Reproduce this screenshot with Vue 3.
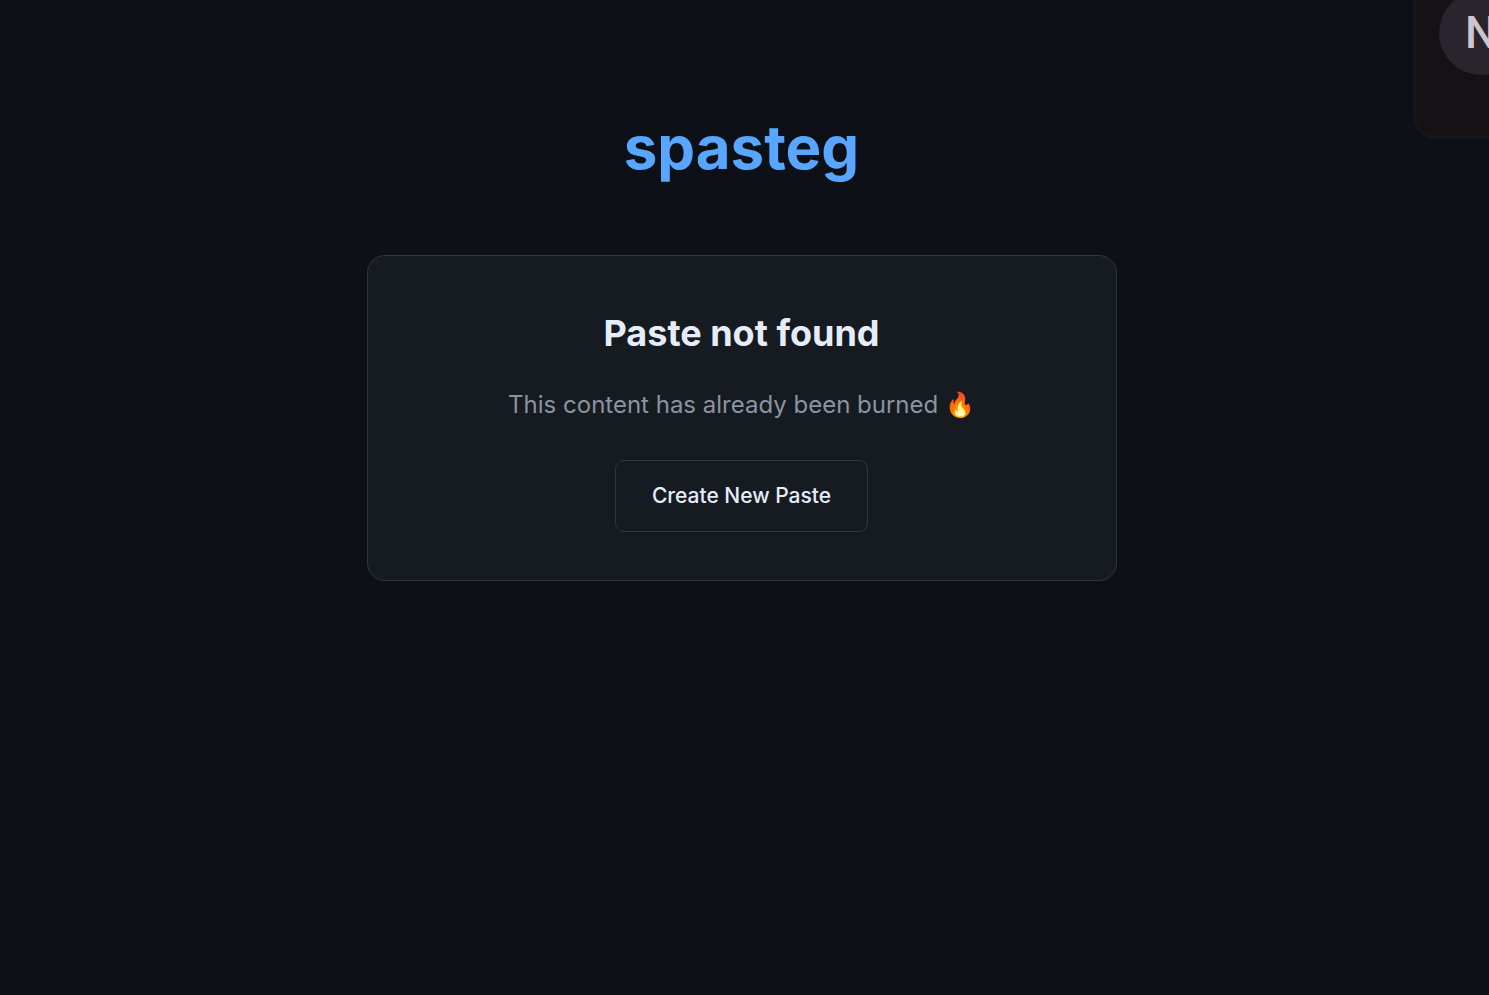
<script setup>
const title = 'spasteg'
const avatarInitial = 'N'
</script>

<template>
  <div class="page">
    <main class="container">
      <h1 class="logo">{{ title }}</h1>
      <section class="card">
        <h2 class="heading">Paste not found</h2>
        <p class="message">This content has already been burned 🔥</p>
        <a class="button" href="/">Create New Paste</a>
      </section>
    </main>
    <aside class="panel">
      <div class="avatar">{{ avatarInitial }}</div>
    </aside>
  </div>
</template>

<style>
body {
  background: #0d1117;
}
</style>

<style scoped>
.page {
  position: relative;
  box-sizing: border-box;
  min-height: 100vh;
  padding: 108px 6px 48px 0;
  overflow: hidden;
  background: #0d1117;
  color: #e6edf8;
  font-family: Inter, "Liberation Sans", "Noto Color Emoji", sans-serif;
}

.container {
  max-width: 750px;
  margin: 0 auto;
  text-align: center;
}

.logo {
  margin: 0 0 69px;
  color: #58a6ff;
  font-size: 60px;
  font-weight: 700;
  line-height: 78px;
}

.card {
  padding: 48px;
  border: 1px solid #30363d;
  border-radius: 18px;
  background: #161b22;
}

.heading {
  margin: 0 0 24px;
  font-size: 36px;
  font-weight: 700;
  line-height: 58px;
}

.message {
  margin: 0 0 36px;
  color: #8b949e;
  font-size: 24px;
  line-height: 38px;
}

.button {
  display: inline-block;
  padding: 18px 36px;
  border: 1px solid #30363d;
  border-radius: 9px;
  color: #e6edf8;
  font-size: 21px;
  font-weight: 500;
  line-height: 34px;
  text-decoration: none;
  vertical-align: top;
}

.panel {
  position: absolute;
  top: -36px;
  right: -300px;
  box-sizing: border-box;
  width: 375px;
  height: 174px;
  padding: 25px 23px;
  border: 2px solid #18171c;
  border-radius: 20px;
  background: #151216;
  box-shadow: 0 0 3px #17171c;
}

.avatar {
  width: 84px;
  height: 84px;
  border-radius: 50%;
  background: #2a242d;
  color: #cdc4cf;
  font-family: Roboto, sans-serif;
  font-size: 45px;
  font-weight: 500;
  line-height: 84px;
  text-align: center;
}
</style>
